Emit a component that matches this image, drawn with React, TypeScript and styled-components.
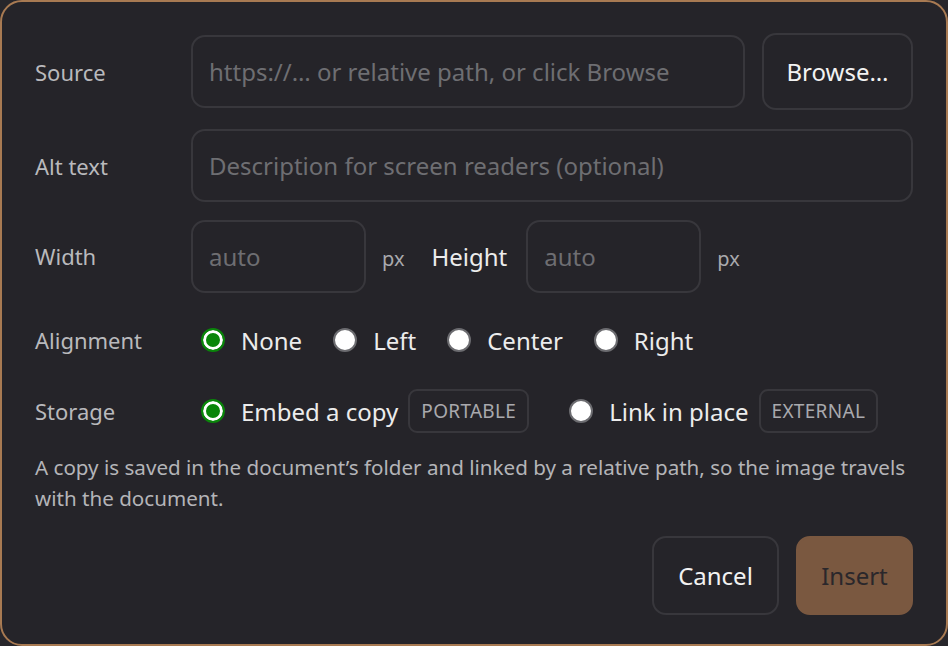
import React from "react";
import styled, { createGlobalStyle } from "styled-components";

const Global = createGlobalStyle`
    html, body {
        margin: 0;
        padding: 0;
        background: #27262b;
    }
    * {
        box-sizing: border-box;
    }
`;

const Dialog = styled.div`
    width: 948px;
    height: 646px;
    border: 2px solid #a87a52;
    border-radius: 22px;
    background: #252429;
    padding: 31px 33px 29px 32px;
    display: flex;
    flex-direction: column;
    font-family: "Noto Sans", "Open Sans", sans-serif;
    color: #ececec;
`;

const Row = styled.div<{ h: number; mt: number }>`
    display: grid;
    grid-template-columns: 157px 1fr;
    align-items: center;
    height: ${(p) => p.h}px;
    margin-top: ${(p) => p.mt}px;
`;

const Label = styled.div`
    font-size: 22px;
    color: #b9b9bc;
    padding-left: 1px;
`;

const Fields = styled.div`
    display: flex;
    align-items: center;
    height: 100%;
`;

const Input = styled.input<{ w?: number }>`
    height: 73px;
    width: ${(p) => (p.w ? `${p.w}px` : "auto")};
    flex: ${(p) => (p.w ? "none" : "1")};
    min-width: 0;
    background: transparent;
    border: 2px solid #38373c;
    border-radius: 14px;
    padding: 0 16px;
    font-family: inherit;
    font-size: 24px;
    color: #eee;
    outline: none;
    &::placeholder {
        color: #6e6e72;
    }
`;

const Button = styled.button<{ primary?: boolean; w: number; h: number }>`
    width: ${(p) => p.w}px;
    height: ${(p) => p.h}px;
    border-radius: 14px;
    border: 2px solid ${(p) => (p.primary ? "#7a5840" : "#38373c")};
    background: ${(p) => (p.primary ? "#7a5840" : "transparent")};
    color: ${(p) => (p.primary ? "#2a272b" : "#f2f2f2")};
    font-family: inherit;
    font-size: 24px;
    flex: none;
    padding: 0;
`;

const Unit = styled.span`
    font-size: 20px;
    color: #a9a9ad;
    margin: 4px 27px 0 16px;
`;

const InlineLabel = styled.span`
    font-size: 24px;
    color: #ececec;
    margin-right: 19px;
`;

const Options = styled.div<{ gap: number }>`
    display: flex;
    align-items: center;
    gap: ${(p) => p.gap}px;
    padding-left: 10px;
`;

const Option = styled.label`
    display: flex;
    align-items: center;
    gap: 16px;
    font-size: 24px;
    color: #ececec;
`;

const Radio = styled.span<{ checked?: boolean }>`
    width: 24px;
    height: 24px;
    border-radius: 50%;
    flex: none;
    background: ${(p) => (p.checked ? "#0a850a" : "#ffffff")};
    border: ${(p) => (p.checked ? "2px solid #0a850a" : "2px solid #6c6c70")};
    box-shadow: ${(p) => (p.checked ? "inset 0 0 0 3px #ffffff" : "none")};
`;

const Badge = styled.span`
    display: inline-flex;
    align-items: center;
    height: 44px;
    padding: 0 11px;
    margin-left: -6px;
    border: 2px solid #38373c;
    border-radius: 9px;
    font-size: 19px;
    letter-spacing: 0.3px;
    color: #a9a9ad;
`;

const Help = styled.p`
    margin: 19px 0 0 1px;
    font-size: 20.6px;
    line-height: 31px;
    color: #b4b4b8;
`;

const Footer = styled.div`
    display: flex;
    justify-content: flex-end;
    align-items: center;
    gap: 17px;
    margin-top: 22px;
`;

const App = () => {
    return (
        <>
            <Global />
            <Dialog>
                <Row h={77} mt={0}>
                    <Label>Source</Label>
                    <Fields style={{ gap: 17 }}>
                        <Input placeholder="https://… or relative path, or click Browse" />
                        <Button w={151} h={77}>
                            Browse…
                        </Button>
                    </Fields>
                </Row>
                <Row h={72} mt={19}>
                    <Label>Alt text</Label>
                    <Fields>
                        <Input placeholder="Description for screen readers (optional)" />
                    </Fields>
                </Row>
                <Row h={74} mt={18}>
                    <Label>Width</Label>
                    <Fields>
                        <Input w={175} placeholder="auto" />
                        <Unit>px</Unit>
                        <InlineLabel>Height</InlineLabel>
                        <Input w={175} placeholder="auto" />
                        <Unit>px</Unit>
                    </Fields>
                </Row>
                <Row h={40} mt={27}>
                    <Label>Alignment</Label>
                    <Options gap={31}>
                        <Option>
                            <Radio checked />
                            None
                        </Option>
                        <Option>
                            <Radio />
                            Left
                        </Option>
                        <Option>
                            <Radio />
                            Center
                        </Option>
                        <Option>
                            <Radio />
                            Right
                        </Option>
                    </Options>
                </Row>
                <Row h={44} mt={29}>
                    <Label>Storage</Label>
                    <Options gap={40}>
                        <Option>
                            <Radio checked />
                            Embed a copy
                            <Badge>PORTABLE</Badge>
                        </Option>
                        <Option>
                            <Radio />
                            Link in place
                            <Badge>EXTERNAL</Badge>
                        </Option>
                    </Options>
                </Row>
                <Help>
                    A copy is saved in the document’s folder and linked by a relative path, so the image
                    travels with the document.
                </Help>
                <Footer>
                    <Button w={127} h={79}>
                        Cancel
                    </Button>
                    <Button primary w={117} h={79}>
                        Insert
                    </Button>
                </Footer>
            </Dialog>
        </>
    );
};

export default App;
